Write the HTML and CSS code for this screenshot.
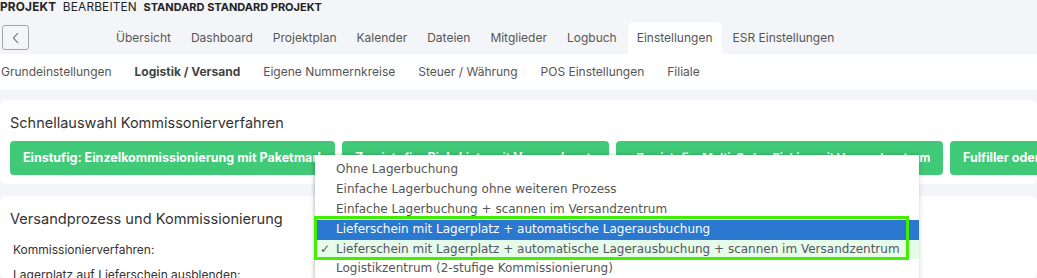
FILE: index.html
```html
<!DOCTYPE html>
<html lang="de">
<head>
<meta charset="utf-8">
<title>Projekt bearbeiten</title>
<link rel="stylesheet" href="styles.css">
</head>
<body>
<div class="crumbs"><b>PROJEKT</b> <span>BEARBEITEN</span> <b class="name">STANDARD STANDARD PROJEKT</b></div>

<div class="topnav">
    <a class="back" href="javascript:;">
        <svg width="10" height="14" viewBox="0 0 10 14"><path d="M7 2 L2.5 7 L7 12" fill="none" stroke="#666" stroke-width="1.1"/></svg>
    </a>
    <ul class="tabs">
        <li>Übersicht</li>
        <li>Dashboard</li>
        <li>Projektplan</li>
        <li>Kalender</li>
        <li>Dateien</li>
        <li>Mitglieder</li>
        <li>Logbuch</li>
        <li class="active">Einstellungen</li>
        <li>ESR Einstellungen</li>
    </ul>
</div>

<ul class="subnav">
    <li>Grundeinstellungen</li>
    <li class="active">Logistik / Versand</li>
    <li>Eigene Nummernkreise</li>
    <li>Steuer / Währung</li>
    <li>POS Einstellungen</li>
    <li>Filiale</li>
</ul>

<div class="main">
    <div class="card quick">
        <h2>Schnellauswahl Kommissonierverfahren</h2>
        <div class="btns">
            <a class="btn b1" href="javascript:;">Einstufig: Einzelkommissionierung mit Paketmarke</a>
            <a class="btn b2" href="javascript:;">Zweistufig: Pick-Liste mit Versandzentrum</a>
            <a class="btn b3" href="javascript:;">Zweistufig: Multi-Order-Picking mit Versandzentrum</a>
            <a class="btn b4" href="javascript:;">Fulfiller oder Logistikdienstleister</a>
        </div>
    </div>

    <div class="card process">
        <h2>Versandprozess und Kommissionierung</h2>
        <div class="row">Kommissionierverfahren:</div>
        <div class="row">Lagerplatz auf Lieferschein ausblenden:</div>
    </div>

    <ul class="dropdown">
        <li>Ohne Lagerbuchung</li>
        <li>Einfache Lagerbuchung ohne weiteren Prozess</li>
        <li>Einfache Lagerbuchung + scannen im Versandzentrum</li>
        <li class="hover">Lieferschein mit Lagerplatz + automatische Lagerausbuchung</li>
        <li class="checked"><span class="tick">✓</span>Lieferschein mit Lagerplatz + automatische Lagerausbuchung + scannen im Versandzentrum</li>
        <li>Logistikzentrum (2-stufige Kommissionierung)</li>
    </ul>
    <div class="mark"></div>
</div>
</body>
</html>
```

FILE: styles.css
```css
body { margin: 0; background: #f4f5f8; font-family: Inter, "Liberation Sans", sans-serif; color: #444; overflow: hidden; }
ul { padding: 0; margin: 0; }
li { list-style: none; }
a { text-decoration: none; }

.crumbs { height: 15px; font-size: 11.8px; line-height: 14px; color: #222; letter-spacing: 0.2px; }
.crumbs b { font-weight: 700; }
.crumbs .name { font-size: 11px; letter-spacing: 0; }
.crumbs span { margin: 0 3px; }

.topnav { height: 39px; display: flex; align-items: flex-end; }
.back { width: 25px; height: 23px; margin: 0 0 4px 2px; border: 1px solid #a5a5a5; border-radius: 3px; display: flex; align-items: center; justify-content: center; }
.tabs { display: flex; margin-left: 78px; gap: 2px; }
.tabs li { padding: 0 9px; height: 32px; line-height: 32px; font-size: 12px; color: #555; }
.tabs li.active { background: #fff; border-radius: 6px 6px 0 0; }

.subnav { background: #fff; height: 35px; display: flex; align-items: center; font-size: 12px; color: #555; padding-left: 1px; }
.subnav li { margin-right: 23px; }
.subnav li.active { font-weight: 700; color: #444; }

.main { position: relative; padding-top: 11px; }
.card { background: #fff; border-radius: 6px; padding: 0 10px; }
.card h2 { margin: 0; font-weight: 400; color: #333; }
.quick { height: 84px; }
.quick h2 { font-size: 14.5px; padding-top: 14px; line-height: 18px; }
.btns { display: flex; gap: 7px; margin-top: 9px; white-space: nowrap; }
.btn { display: block; height: 34px; line-height: 34px; background: #40c976; color: #fff; font-size: 12.5px; font-weight: 700; border-radius: 4px; padding: 0 13px; flex: none; overflow: hidden; }
.b1 { width: 299px; }
.b2 { width: 241px; text-align: center; }
.b3 { width: 301px; text-align: right; font-size: 11.8px; letter-spacing: -0.2px; }
.b4 { width: 200px; }

.process { margin-top: 12px; height: 82px; }
.process h2 { font-size: 14.6px; padding-top: 13px; line-height: 20px; }
.row { font-size: 12px; color: #333; margin-left: 3px; line-height: 25px; }
.process h2 + .row { margin-top: 8px; }

.dropdown { position: absolute; left: 315px; top: 66px; width: 604px; background: #fff; box-shadow: -1px 0 3px rgba(0,0,0,0.18), 0 1px 6px rgba(0,0,0,0.12); padding-top: 5px; font-family: "DejaVu Sans", Verdana, sans-serif; font-size: 12px; color: #555; }
.dropdown li { height: 20px; line-height: 19px; padding-left: 21px; position: relative; white-space: nowrap; }
.dropdown li.hover { background: #2b78d0; color: #fff; }
.dropdown li.checked { background: #e6fbe8; color: #556; height: 19px; }
.tick { position: absolute; left: 5px; }
.mark { position: absolute; left: 314px; top: 127px; width: 589px; height: 38px; border: 3px solid #44ee00; }
```
